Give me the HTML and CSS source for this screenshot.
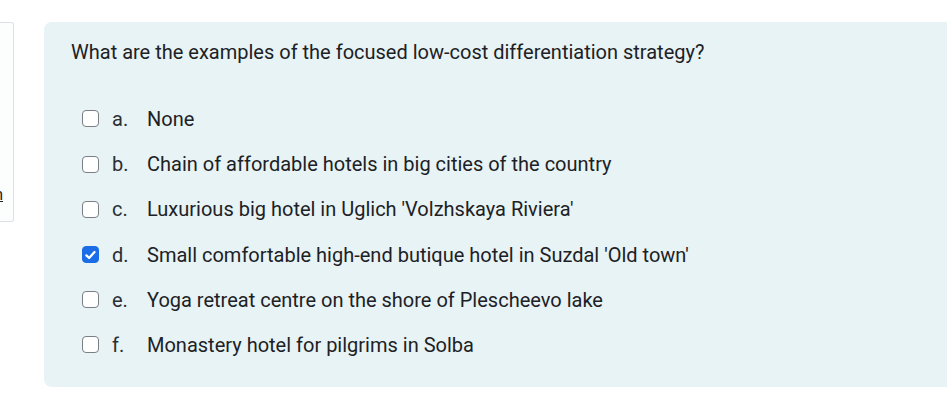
FILE: index.html
```html
<!DOCTYPE html>
<html lang="en">
<head>
<meta charset="utf-8">
<link rel="stylesheet" href="styles.css">
</head>
<body>
<div class="page">
  <div class="side"><a class="side-link" href="#">n</a></div>
  <div class="question">
    <div class="qtext">What are the examples of the focused low-cost differentiation strategy?</div>
    <div class="answers">
      <div class="opt"><span class="box"></span><span class="letter">a.</span><span class="label">None</span></div>
      <div class="opt"><span class="box"></span><span class="letter">b.</span><span class="label">Chain of affordable hotels in big cities of the country</span></div>
      <div class="opt"><span class="box"></span><span class="letter">c.</span><span class="label">Luxurious big hotel in Uglich 'Volzhskaya Riviera'</span></div>
      <div class="opt"><span class="box checked"><svg viewBox="0 0 16 16" width="16" height="16"><path d="M3.6 8.4 L6.5 11.2 L12.3 4.8" fill="none" stroke="#fff" stroke-width="2.4" stroke-linecap="round" stroke-linejoin="round"/></svg></span><span class="letter">d.</span><span class="label">Small comfortable high-end butique hotel in Suzdal 'Old town'</span></div>
      <div class="opt"><span class="box"></span><span class="letter">e.</span><span class="label">Yoga retreat centre on the shore of Plescheevo lake</span></div>
      <div class="opt"><span class="box"></span><span class="letter">f.</span><span class="label">Monastery hotel for pilgrims in Solba</span></div>
    </div>
  </div>
</div>
</body>
</html>
```

FILE: styles.css
```css
html, body {
  margin: 0;
  padding: 0;
  background: #fff;
  overflow: hidden;
}
body {
  font-family: Roboto, "Liberation Sans", sans-serif;
  color: #1d2125;
  width: 947px;
  height: 407px;
}
.page {
  display: flex;
  align-items: flex-start;
  padding-top: 22px;
}
.side {
  flex: 0 0 auto;
  width: 14px;
  height: 198px;
  margin-left: -1px;
  border: 1px solid #dee2e6;
  border-left: none;
  border-radius: 0 3px 3px 0;
  background: #fcfdfd;
  position: relative;
  overflow: hidden;
}
.side-link {
  position: absolute;
  right: 10px;
  top: 163px;
  font-size: 16px;
  color: #1d2125;
  text-decoration: underline;
  line-height: 18px;
}
.question {
  flex: 1 1 auto;
  margin-left: 30px;
  margin-right: -20px;
  background: #e7f3f5;
  border-radius: 8px;
  padding: 15px 27px 19.4px 27px;
}
.qtext {
  font-size: 20px;
  line-height: 30px;
  margin-bottom: 29.4px;
}
.answers {
  padding-left: 11px;
}
.opt {
  display: flex;
  align-items: center;
  font-size: 20px;
  line-height: 30px;
  padding: 7.6px 0;
}
.box {
  flex: 0 0 auto;
  width: 17px;
  height: 17px;
  box-sizing: border-box;
  border: 1.5px solid #7a7f85;
  border-radius: 4px;
  background: #fff;
  display: flex;
  align-items: center;
  justify-content: center;
}
.box.checked {
  background: #1a6de6;
  border-color: #1a6de6;
}
.box svg {
  display: block;
}
.letter {
  width: 35px;
  margin-left: 13px;
  color: #2b2f33;
}
```
